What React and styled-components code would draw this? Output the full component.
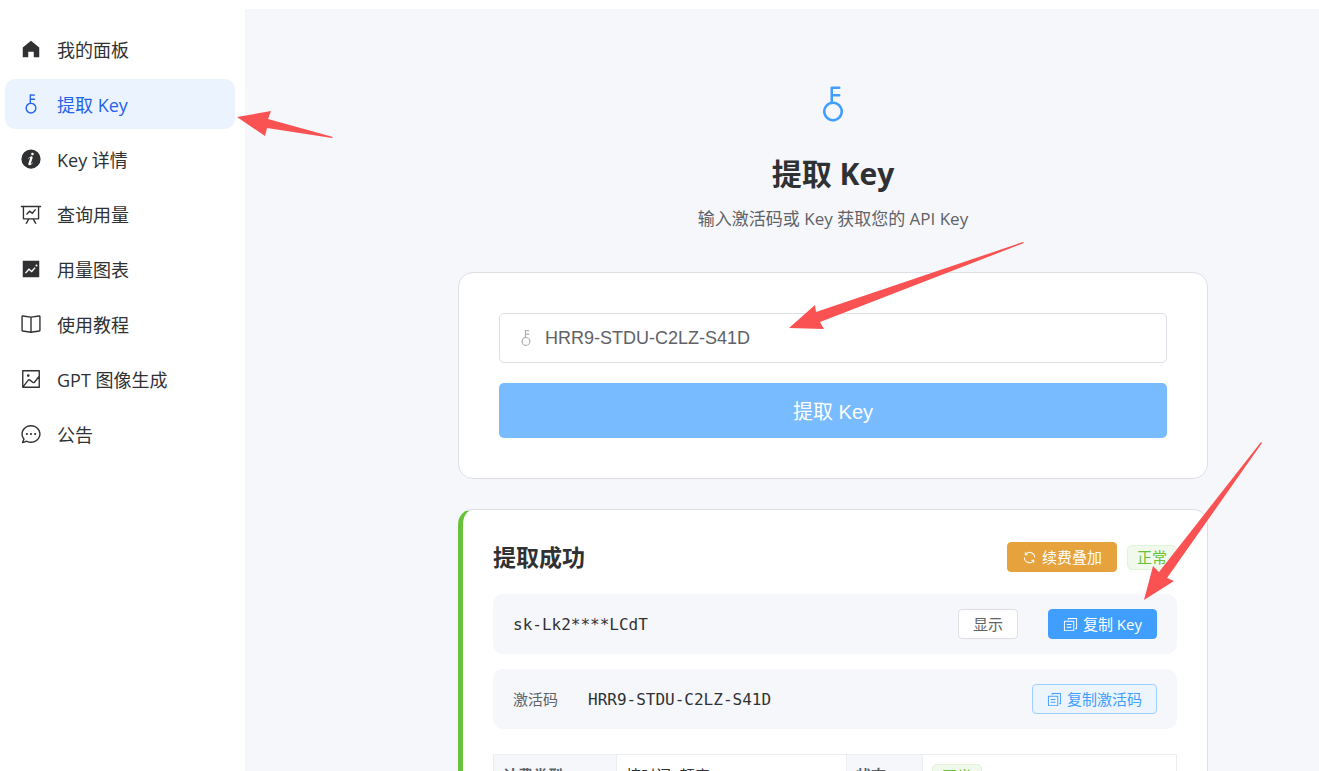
import React, { useState } from 'react';
import styled, { createGlobalStyle, css } from 'styled-components';

const colors = {
  primary: '#409eff',
  primarySoft: '#ecf5ff',
  primaryDisabled: '#79bbff',
  active: '#2563eb',
  activeBg: '#ebf3ff',
  success: '#67c23a',
  warning: '#e6a23c',
  heading: '#303133',
  text: '#606266',
  muted: '#a8abb2',
  border: '#dcdfe6',
  line: '#ebeef5',
  page: '#f5f7fb',
  white: '#fff',
  arrow: '#fa5252'
};

const sans = "'Open Sans', 'Noto Sans CJK SC', sans-serif";
const arial = "'Liberation Sans', 'Noto Sans CJK SC', sans-serif";
const mono = "'DejaVu Sans Mono', 'Liberation Mono', monospace";

const icons = {
  home: 'M512 128 128 447.936V896h255.936V640H640v256h255.936V447.936z',
  key:
    'M448 456.064V96a32 32 0 0 1 32-32.064L672 64a32 32 0 0 1 0 64H512v128h160a32 32 0 0 1 0 64H512v128a256 256 0 1 1-64 8.064M512 896a192 192 0 1 0 0-384 192 192 0 0 0 0 384',
  info:
    'M512 64a448 448 0 1 1 0 896.064A448 448 0 0 1 512 64m67.2 275.072c33.28 0 60.288-23.104 60.288-57.344s-27.072-57.344-60.288-57.344c-33.28 0-60.16 23.104-60.16 57.344s26.88 57.344 60.16 57.344M590.912 699.2c0-6.848 2.368-24.64 1.024-34.752l-52.608 60.544c-10.88 11.456-24.512 19.392-30.912 17.28a12.992 12.992 0 0 1-8.256-14.72l87.68-276.992c7.168-35.136-12.544-67.2-54.336-71.296-44.096 0-108.992 44.736-148.48 101.504 0 6.784-1.28 23.68.064 33.792l52.544-60.608c10.88-11.328 23.552-19.328 29.952-17.152a12.8 12.8 0 0 1 7.808 16.128L388.48 728.576c-10.048 32.256 8.96 63.872 55.04 71.04 67.84 0 107.904-43.648 147.456-100.416z',
  board:
    'M359.168 768H160a32 32 0 0 1-32-32V192H64a32 32 0 0 1 0-64h896a32 32 0 1 1 0 64h-64v544a32 32 0 0 1-32 32H665.216l110.848 192h-73.856L591.36 768H433.024L322.176 960H248.32zM832 192H192v512h640zM342.656 534.656a32 32 0 1 1-45.312-45.312L444.992 341.76l125.44 94.08L679.04 300.032a32 32 0 1 1 49.92 39.936L581.632 524.224 451.008 426.24z',
  trend:
    'M128 896V128h768v768zm291.712-327.296 128 102.4 180.16-201.792-47.744-42.624-139.84 156.608-128-102.4-180.16 201.792 47.744 42.624 139.84-156.608zM816 352a48 48 0 1 0-96 0 48 48 0 0 0 96 0',
  book:
    'm512 863.36 384-54.848v-638.72L525.568 222.72a96 96 0 0 1-27.136 0L128 169.792v638.72zM137.024 106.432l370.432 52.928a32 32 0 0 0 9.088 0l370.432-52.928A64 64 0 0 1 960 169.792v638.72a64 64 0 0 1-54.976 63.36l-388.48 55.488a32 32 0 0 1-9.088 0l-388.48-55.488A64 64 0 0 1 64 808.512v-638.72a64 64 0 0 1 73.024-63.36z M480 192h64v704h-64z',
  picture:
    'M160 160v704h704V160zm-32-64h768a32 32 0 0 1 32 32v768a32 32 0 0 1-32 32H128a32 32 0 0 1-32-32V128a32 32 0 0 1 32-32 M384 288q64 0 64 64t-64 64-64-64 64-64M185.408 876.992l-50.816-38.912L350.72 556.032a96 96 0 0 1 134.592-17.856l1.856 1.472 122.88 99.136a32 32 0 0 0 44.992-4.864l216-269.888 49.92 39.936-215.808 269.824-.256.32a96 96 0 0 1-135.04 14.464l-122.88-99.072-.64-.512a32 32 0 0 0-44.8 5.952z',
  chat:
    'm174.72 855.68 135.296-45.12 23.68 11.84C388.096 849.536 448.576 864 512 864c211.84 0 384-166.784 384-352S723.84 160 512 160 128 326.784 128 512c0 69.12 24.96 139.264 70.848 199.232l22.08 28.8-46.272 115.584zm-45.248 82.56A32 32 0 0 1 89.6 896l58.368-145.92C94.72 680.32 64 596.864 64 512 64 299.904 256 96 512 96s448 203.904 448 416-192 416-448 416a461.056 461.056 0 0 1-206.912-48.384l-175.616 58.56z M512 563.2a51.2 51.2 0 1 1 0-102.4 51.2 51.2 0 0 1 0 102.4m192 0a51.2 51.2 0 1 1 0-102.4 51.2 51.2 0 0 1 0 102.4m-384 0a51.2 51.2 0 1 1 0-102.4 51.2 51.2 0 0 1 0 102.4',
  refresh:
    'M771.776 794.88A384 384 0 0 1 128 512h64a320 320 0 0 0 555.712 216.448H654.72a32 32 0 1 1 0-64h149.056a32 32 0 0 1 32 32v148.928a32 32 0 1 1-64 0v-50.56zM276.288 295.616h92.992a32 32 0 0 1 0 64H220.16a32 32 0 0 1-32-32V178.56a32 32 0 0 1 64 0v50.56A384 384 0 0 1 896.128 512h-64a320 320 0 0 0-555.776-216.384z',
  copy:
    'M128 320v576h576V320zm-32-64h640a32 32 0 0 1 32 32v640a32 32 0 0 1-32 32H96a32 32 0 0 1-32-32V288a32 32 0 0 1 32-32M960 96v704a32 32 0 0 1-32 32h-96v-64h64V128H384v64h-64V96a32 32 0 0 1 32-32h576a32 32 0 0 1 32 32M256 672h320v64H256zm0-192h320v64H256z'
};

const menu = [
  { icon: 'home', label: '我的面板' },
  { icon: 'key', label: '提取 Key', active: true },
  { icon: 'info', label: 'Key 详情' },
  { icon: 'board', label: '查询用量' },
  { icon: 'trend', label: '用量图表' },
  { icon: 'book', label: '使用教程' },
  { icon: 'picture', label: 'GPT 图像生成' },
  { icon: 'chat', label: '公告' }
];

const GlobalStyle = createGlobalStyle`
  *, *::before, *::after {
    box-sizing: border-box;
  }

  body {
    margin: 0;
    background: ${colors.white};
    color: ${colors.heading};
    font-family: ${sans};
    font-size: 15px;
  }

  button, input {
    margin: 0;
    font: inherit;
  }
`;

const Svg = styled.svg`
  display: block;
  flex: none;
  width: ${(props) => props.$size}px;
  height: ${(props) => props.$size}px;
  fill: currentColor;
`;

const Icon = ({ name, size }) => (
  <Svg viewBox="0 0 1024 1024" $size={size} aria-hidden="true">
    <path d={icons[name]} />
  </Svg>
);

const Shell = styled.div`
  position: relative;
  display: flex;
  height: 100vh;
  padding-top: 9px;
  overflow: hidden;
`;

const Sidebar = styled.nav`
  flex: none;
  display: flex;
  flex-direction: column;
  gap: 5px;
  width: 245px;
  padding: 15px 10px 15px 5px;
`;

const MenuLink = styled.a`
  display: flex;
  align-items: center;
  gap: 15px;
  height: 50px;
  padding: 0 15px;
  border-radius: 10px;
  font-size: 18px;
  text-decoration: none;
  color: ${(props) => (props.$active ? colors.active : colors.heading)};
  background: ${(props) => (props.$active ? colors.activeBg : 'transparent')};
`;

const Main = styled.main`
  flex: 1;
  min-width: 0;
  padding: 75px 0 0 102px;
  background: ${colors.page};
  overflow: auto;
  scrollbar-width: none;
`;

const Content = styled.div`
  max-width: 750px;
  margin: 0 auto;
`;

const Hero = styled.header`
  display: flex;
  flex-direction: column;
  align-items: center;
  margin-bottom: 38px;
  color: ${colors.primary};
`;

const Title = styled.h1`
  margin: 30px 0 10px;
  font-size: 30px;
  line-height: 40px;
  color: ${colors.heading};
`;

const Subtitle = styled.p`
  margin: 0;
  font-size: 17px;
  line-height: 30px;
  color: ${colors.text};
`;

const Card = styled.section`
  margin-bottom: 30px;
  padding: 40px;
  background: ${colors.white};
  border: 1px solid ${colors.border};
  border-radius: 15px;
`;

const ResultCard = styled(Card)`
  padding: 30px;
  border-left: 5px solid ${colors.success};
`;

const Form = styled.form`
  display: flex;
  flex-direction: column;
  gap: 20px;
`;

const Field = styled.label`
  display: flex;
  align-items: center;
  gap: 10px;
  height: 50px;
  padding: 0 17px;
  border: 1px solid ${colors.border};
  border-radius: 5px;
  color: ${colors.muted};
`;

const Input = styled.input`
  flex: 1;
  min-width: 0;
  padding: 0;
  border: none;
  outline: none;
  background: transparent;
  font-family: ${arial};
  font-size: 18px;
  color: ${colors.text};
`;

const SubmitButton = styled.button`
  height: 55px;
  border: none;
  border-radius: 5px;
  background: ${colors.primaryDisabled};
  color: ${colors.white};
  font-family: ${arial};
  font-size: 20px;
  cursor: pointer;
`;

const variants = {
  plain: css`
    color: ${colors.text};
    background: ${colors.white};
    border-color: ${colors.border};
  `,
  primary: css`
    color: ${colors.white};
    background: ${colors.primary};
    border-color: ${colors.primary};
  `,
  soft: css`
    color: ${colors.primary};
    background: ${colors.primarySoft};
    border-color: #a0cfff;
  `,
  warning: css`
    color: ${colors.white};
    background: ${colors.warning};
    border-color: ${colors.warning};
  `
};

const Button = styled.button`
  display: flex;
  align-items: center;
  gap: 5px;
  height: 30px;
  padding: 0 14px;
  border: 1px solid;
  border-radius: 4px;
  font-size: 15px;
  line-height: 20px;
  white-space: nowrap;
  cursor: pointer;
  ${(props) => variants[props.$variant]}
`;

const Tag = styled.span`
  display: inline-flex;
  align-items: center;
  height: 25px;
  padding: 0 9px;
  border: 1px solid #e1f3d8;
  border-radius: 5px;
  background: #f0f9eb;
  color: ${colors.success};
  font-size: 15px;
  line-height: 1;
  vertical-align: top;
`;

const ResultHeader = styled.div`
  display: flex;
  align-items: center;
  gap: 10px;
  height: 34px;
  margin-bottom: 20px;
`;

const ResultTitle = styled.h2`
  flex: 1;
  margin: 0;
  font-size: 23px;
  line-height: 34px;
`;

const KeyRow = styled.div`
  display: flex;
  align-items: center;
  gap: 30px;
  height: 60px;
  margin-bottom: 15px;
  padding: 0 20px;
  border-radius: 10px;
  background: ${colors.page};
`;

const KeyLabel = styled.span`
  color: ${colors.text};
  line-height: 20px;
`;

const Code = styled.code`
  flex: 1;
  font-family: ${mono};
  font-size: 16px;
`;

const Table = styled.table`
  width: 100%;
  margin-top: 25px;
  table-layout: fixed;
  border-collapse: collapse;
  font-size: 15px;
  line-height: 22px;

  th,
  td {
    padding: 9px;
    border: 1px solid ${colors.line};
    text-align: left;
    vertical-align: top;
  }

  th {
    background: ${colors.page};
    color: ${colors.text};
  }
`;

const Col = styled.col`
  width: ${(props) => (props.$width ? `${props.$width}px` : 'auto')};
`;

// Hand-drawn markers lie over the whole page
const Arrows = styled.svg`
  position: absolute;
  top: 0;
  left: 0;
  width: 1319px;
  height: 771px;
  fill: ${colors.arrow};
  pointer-events: none;
`;

const App = () => {
  const [code, setCode] = useState('HRR9-STDU-C2LZ-S41D');

  return (
    <>
      <GlobalStyle />
      <Shell>
        <Sidebar>
          {menu.map((item) => (
            <MenuLink key={item.label} href="#" $active={item.active}>
              <Icon name={item.icon} size={22} />
              {item.label}
            </MenuLink>
          ))}
        </Sidebar>
        <Main>
          <Content>
            <Hero>
              <Icon name="key" size={40} />
              <Title>提取 Key</Title>
              <Subtitle>输入激活码或 Key 获取您的 API Key</Subtitle>
            </Hero>
            <Card>
              <Form onSubmit={(e) => e.preventDefault()}>
                <Field>
                  <Icon name="key" size={18} />
                  <Input
                    aria-label="激活码或 Key"
                    value={code}
                    onChange={(e) => setCode(e.target.value)}
                  />
                </Field>
                <SubmitButton type="submit">提取 Key</SubmitButton>
              </Form>
            </Card>
            <ResultCard>
              <ResultHeader>
                <ResultTitle>提取成功</ResultTitle>
                <Button type="button" $variant="warning">
                  <Icon name="refresh" size={15} />
                  续费叠加
                </Button>
                <Tag>正常</Tag>
              </ResultHeader>
              <KeyRow>
                <Code>sk-Lk2****LCdT</Code>
                <Button type="button" $variant="plain">显示</Button>
                <Button type="button" $variant="primary">
                  <Icon name="copy" size={15} />
                  复制 Key
                </Button>
              </KeyRow>
              <KeyRow>
                <KeyLabel>激活码</KeyLabel>
                <Code>{code}</Code>
                <Button type="button" $variant="soft">
                  <Icon name="copy" size={15} />
                  复制激活码
                </Button>
              </KeyRow>
              <Table>
                <colgroup>
                  <Col $width={123} />
                  <Col $width={230} />
                  <Col $width={76} />
                  <Col />
                </colgroup>
                <tbody>
                  <tr>
                    <th scope="row">计费类型</th>
                    <td>按时间+额度</td>
                    <th scope="row">状态</th>
                    <td><Tag>正常</Tag></td>
                  </tr>
                </tbody>
              </Table>
            </ResultCard>
          </Content>
        </Main>
        <Arrows viewBox="0 0 1319 771" aria-hidden="true">
          <path d="M237 117 271 111 268 119 333 137 332 138 267 128 265 136z" />
          <path d="M789 328 815 305 816 312 1023 242 1024 243 820 322 824 329z" />
          <path d="M1144 600 1153 566 1159 572 1261 442 1262 443 1167 578 1174 581z" />
        </Arrows>
      </Shell>
    </>
  );
};

export default App;
